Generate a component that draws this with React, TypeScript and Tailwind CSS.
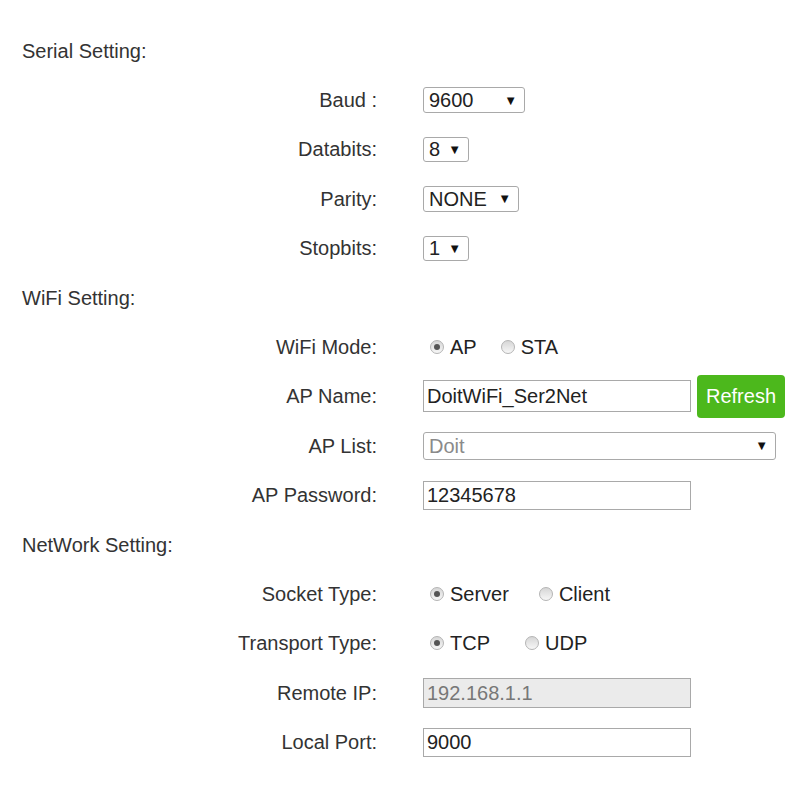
const font = { fontFamily: '"Liberation Sans", Arial, sans-serif' };

function Row({ label, children }: { label?: string; children?: React.ReactNode }) {
  return (
    <div className="flex h-[49.4px] items-center">
      <div className="w-[377px] shrink-0 text-right text-[20px] text-[#333]">{label}</div>
      <div className="ml-[46px] flex items-center">{children}</div>
    </div>
  );
}

function Heading({ children }: { children: React.ReactNode }) {
  return (
    <div className="flex h-[49.4px] items-center pl-[22px] text-[20px] text-[#333]">{children}</div>
  );
}

function Select({ value, w, h = "h-[26px]", muted = false }: { value: string; w: string; h?: string; muted?: boolean }) {
  return (
    <div
      className={`${w} ${h} flex items-center justify-between rounded-[3px] border border-[#a9a9a9] bg-white pl-[5px] pr-[7px] text-[20px] ${
        muted ? "text-[#8a8a8a]" : "text-[#222]"
      }`}
    >
      <span className="leading-none">{value}</span>
      <span className="text-[13px] leading-none text-[#111]">▼</span>
    </div>
  );
}

function Radio({ label, checked, gap }: { label: string; checked?: boolean; gap: string }) {
  return (
    <div className={`flex items-center ${gap}`}>
      <span className="flex h-[14px] w-[14px] items-center justify-center rounded-full border border-[#b4b4b4] bg-gradient-to-b from-[#d6d6d6] to-[#f7f7f7]">
        {checked && <span className="h-[6px] w-[6px] rounded-full bg-[#555]" />}
      </span>
      <span className="ml-[6px] text-[20px] text-[#222]">{label}</span>
    </div>
  );
}

function Input({ value, h = "h-[30px]", disabled = false }: { value: string; h?: string; disabled?: boolean }) {
  return (
    <div
      className={`${h} flex w-[268px] items-center border border-[#a9a9a9] pl-[3px] text-[20px] ${
        disabled ? "bg-[#ebebeb] text-[#777]" : "bg-white text-[#222]"
      }`}
    >
      {value}
    </div>
  );
}

export default function App() {
  return (
    <main className="min-h-screen w-[800px] bg-white pt-[26px]" style={font}>
      <Heading>Serial Setting:</Heading>
      <Row label="Baud :">
        <Select value="9600" w="w-[102px]" />
      </Row>
      <Row label="Databits:">
        <Select value="8" w="w-[46px]" h="h-[25px]" />
      </Row>
      <Row label="Parity:">
        <Select value="NONE" w="w-[96px]" />
      </Row>
      <Row label="Stopbits:">
        <Select value="1" w="w-[46px]" h="h-[25px]" />
      </Row>

      <Heading>WiFi Setting:</Heading>
      <Row label="WiFi Mode:">
        <div className="ml-[7px] flex items-center">
          <Radio label="AP" checked gap="" />
          <Radio label="STA" gap="ml-[24px]" />
        </div>
      </Row>
      <Row label="AP Name:">
        <Input value="DoitWiFi_Ser2Net" h="h-[32px]" />
        <button className="ml-[6px] h-[43px] w-[88px] rounded-[4px] bg-[#4cb81c] text-[20px] text-white">
          Refresh
        </button>
      </Row>
      <Row label="AP List:">
        <Select value="Doit" w="w-[353px]" h="h-[28px]" muted />
      </Row>
      <Row label="AP Password:">
        <Input value="12345678" h="h-[29px]" />
      </Row>

      <Heading>NetWork Setting:</Heading>
      <Row label="Socket Type:">
        <div className="ml-[7px] flex items-center">
          <Radio label="Server" checked gap="" />
          <Radio label="Client" gap="ml-[30px]" />
        </div>
      </Row>
      <Row label="Transport Type:">
        <div className="ml-[7px] flex items-center">
          <Radio label="TCP" checked gap="" />
          <Radio label="UDP" gap="ml-[35px]" />
        </div>
      </Row>
      <Row label="Remote IP:">
        <Input value="192.168.1.1" disabled />
      </Row>
      <Row label="Local Port:">
        <Input value="9000" h="h-[29px]" />
      </Row>
    </main>
  );
}
